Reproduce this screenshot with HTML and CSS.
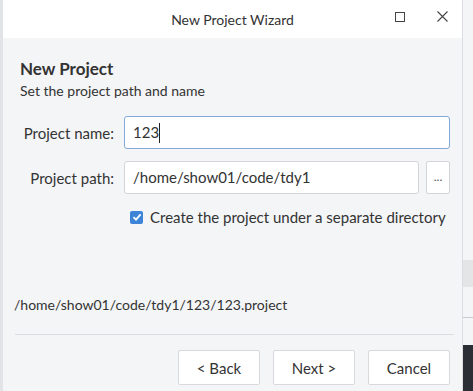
FILE: index.html
```html
<!DOCTYPE html>
<html lang="en">
<head>
    <meta charset="UTF-8">
    <title>New Project Wizard</title>
    <link rel="stylesheet" href="styles.css">
</head>
<body>
    <div class="desk">
        <!-- Janela do assistente -->
        <div class="janela">
            <div class="titulo">
                <span class="titulo-texto">New Project Wizard</span>
                <span class="btn-max"></span>
                <span class="btn-fechar">
                    <svg width="11" height="11" viewBox="0 0 11 11"><path d="M0.5 0.5 L10.5 10.5 M10.5 0.5 L0.5 10.5" stroke="#444" stroke-width="1.1"/></svg>
                </span>
            </div>
            <div class="conteudo">
                <h2>New Project</h2>
                <p class="sub">Set the project path and name</p>

                <div class="linha">
                    <label>Project name:</label>
                    <div class="campo ativo">123<span class="cursor"></span></div>
                </div>
                <div class="linha">
                    <label>Project path:</label>
                    <div class="campo">/home/show01/code/tdy1</div>
                    <div class="reticencias">...</div>
                </div>
                <div class="linha-check">
                    <span class="check">
                        <svg width="10" height="10" viewBox="0 0 10 10"><path d="M1.5 5.2 L4 7.6 L8.6 2.4" fill="none" stroke="#fff" stroke-width="1.8"/></svg>
                    </span>
                    Create the project under a separate directory
                </div>

                <p class="caminho">/home/show01/code/tdy1/123/123.project</p>
                <div class="separador"></div>

                <div class="acoes">
                    <button>&lt; Back</button>
                    <button>Next &gt;</button>
                    <button>Cancel</button>
                </div>
            </div>
        </div>
        <div class="lado">
            <div class="faixa"></div>
            <div class="risco"></div>
            <div class="escuro"></div>
        </div>
    </div>
</body>
</html>
```

FILE: styles.css
```css
body {
    margin: 0;
    font-family: Lato, sans-serif;
    color: #333;
    background: #f4f5f7;
}
.desk {
    display: flex;
    height: 391px;
    overflow: hidden;
    border-left: 3px solid #e2e3e6;
}
.janela {
    width: 459px;
    border-right: 1px solid #dcdde0;
    background: #f4f5f7;
    display: flex;
    flex-direction: column;
}
.titulo {
    height: 38px;
    background: #fff;
    position: relative;
    display: flex;
    align-items: center;
    justify-content: center;
}
.titulo-texto {
    font-size: 14px;
    color: #333;
}
.btn-max {
    position: absolute;
    left: 392px;
    top: 12px;
    width: 8px;
    height: 8px;
    border: 1.2px solid #444;
}
.btn-fechar {
    position: absolute;
    left: 434px;
    top: 11px;
    line-height: 0;
}
.conteudo {
    padding: 20px 12px 0 10px;
}
h2 {
    margin: 0 0 0 7px;
    font-size: 17px;
    font-weight: bold;
    line-height: 22px;
}
.sub {
    margin: 1px 0 0 7px;
    font-size: 14px;
    line-height: 20px;
}
.linha {
    display: flex;
    align-items: center;
    margin-top: 12px;
}
.linha:first-of-type {
    margin-top: 15px;
}
.linha label {
    width: 101px;
    text-align: right;
    padding-right: 10px;
    font-size: 15px;
}
.campo {
    flex: 1;
    height: 33px;
    box-sizing: border-box;
    border: 1px solid #d3d5d9;
    border-radius: 3px;
    background: #fff;
    padding: 0 8px;
    font-size: 15px;
    line-height: 31px;
}
.campo.ativo {
    border-color: #82a9d9;
}
.cursor {
    display: inline-block;
    width: 1px;
    height: 20px;
    background: #222;
    vertical-align: -5px;
}
.reticencias {
    width: 24px;
    height: 33px;
    box-sizing: border-box;
    margin-left: 7px;
    border: 1px solid #d3d5d9;
    border-radius: 2px;
    background: #fff;
    text-align: center;
    font-size: 12px;
    line-height: 30px;
    color: #555;
}
.linha-check {
    display: flex;
    align-items: center;
    margin: 14px 0 0 117px;
    font-size: 15px;
}
.check {
    width: 13px;
    height: 13px;
    border-radius: 2px;
    background: #3d84d9;
    display: flex;
    align-items: center;
    justify-content: center;
    margin-right: 7px;
}
.caminho {
    margin: 69px 0 0 1px;
    font-size: 14px;
    line-height: 20px;
}
.separador {
    margin: 19px -4px 0 2px;
    border-top: 1px solid #dcdde0;
}
.acoes {
    display: flex;
    justify-content: flex-end;
    gap: 13px;
    margin-top: 15px;
}
.acoes button {
    width: 82px;
    height: 35px;
    background: #fff;
    border: 1px solid #d8d9dc;
    border-radius: 2px;
    font-family: Lato, sans-serif;
    font-size: 15px;
    color: #333;
}
.lado {
    flex: 1;
    display: flex;
    flex-direction: column;
}
.faixa {
    margin-top: 260px;
    height: 27px;
    background: #e4e5e7;
}
.risco {
    margin-top: 30px;
    height: 1px;
    background: #c9cacd;
}
.escuro {
    flex: 1;
    margin-top: 27px;
    background: #2b2e35;
}
```
